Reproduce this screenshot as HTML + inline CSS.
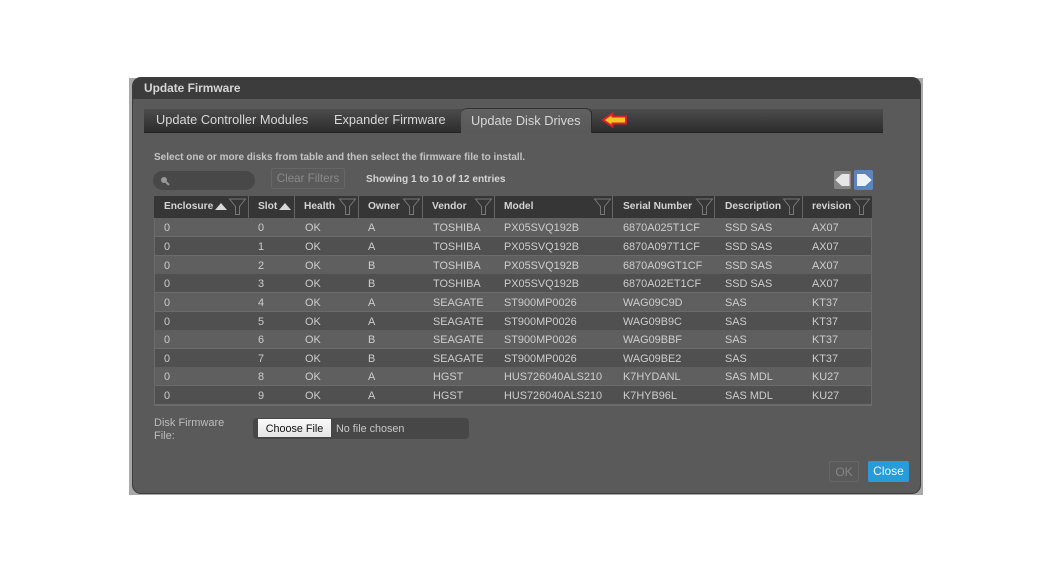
<!DOCTYPE html>
<html>
<head>
<meta charset="utf-8">
<style>
html,body{margin:0;padding:0;background:#fff;}
body{width:1051px;height:571px;position:relative;overflow:hidden;font-family:"Liberation Sans",sans-serif;filter:blur(.3px);}
.a{position:absolute;white-space:nowrap;}
#strip{left:129px;top:78px;width:794px;height:417px;background:#a9a9a9;}
#dlg{left:133px;top:78px;width:787px;height:415px;background:#5a5a5a;border-radius:8px;box-shadow:0 0 0 1px #3d3d3d;overflow:hidden;}
#title{left:133px;top:78px;width:787px;height:21px;background:#3c3c3c;border-radius:8px 8px 0 0;}
#ttext{left:144px;top:81px;font:bold 11.9px "Liberation Sans",sans-serif;color:#d6d6d6;}
#tabbar{left:144px;top:109px;width:739px;height:23px;background:linear-gradient(#4c4c4c,#2d2d2d);border-bottom:1px solid #222;}
#tabon{left:461px;top:108px;width:130px;height:24px;background:linear-gradient(#616161,#585858);border-radius:6px 6px 0 0;border-top:1px solid #333;border-right:1px solid #2c2c2c;}
.tab{font-size:12.8px;color:#d8d8d8;top:112px;}
.t11{font-size:11px;color:#cfcfcf;}
.b{font-weight:bold;}
#search{left:153px;top:171px;width:102px;height:19px;background:#484848;border-radius:10px;}
#clear{left:271px;top:168px;width:74px;height:21px;border:1px solid #666;border-radius:2px;box-sizing:border-box;color:#8a8a8a;font-size:11.6px;line-height:20px;text-align:center;}
#head{left:154px;top:196px;width:718px;height:22px;background:#363636;}
.sep{top:196px;width:1px;height:22px;background:#666;}
.row{left:154px;width:718px;height:18px;border-bottom:1px solid #6b6b6b;box-shadow:inset 1px 0 0 #6b6b6b,inset -1px 0 0 #6b6b6b;}
.l{background:#5f5f5f;}
.d{background:#505050;}
.c{position:absolute;top:1px;font-size:10.9px;color:#cdcdcd;line-height:18px;}
.h{font-size:10.2px;font-weight:bold;color:#d4d4d4;top:201px;}
#file{left:253px;top:418px;width:216px;height:21px;background:#474747;border-radius:4px;}
#btn{left:258px;top:419px;width:73px;height:18px;background:linear-gradient(#fafafa,#e4e4e4);color:#111;font-size:10.8px;line-height:20px;text-align:center;}
#ok{left:829px;top:461px;width:30px;height:21px;border:1px solid #666;box-sizing:border-box;border-radius:2px;color:#868686;font-size:12px;line-height:20px;text-align:center;}
#close{left:868px;top:461px;width:41px;height:21px;background:#269ddb;border-radius:2px;color:#f0f6fa;font-size:12px;line-height:21px;text-align:center;}
svg{position:absolute;overflow:visible;}
</style>
</head>
<body>
<div class="a" id="strip"></div>
<div class="a" id="dlg"></div>
<div class="a" id="title"></div>
<div class="a" id="ttext">Update Firmware</div>

<div class="a" id="tabbar"></div>
<div class="a" id="tabon"></div>
<div class="a tab" style="left:156px">Update Controller Modules</div>
<div class="a tab" style="left:334px">Expander Firmware</div>
<div class="a tab" style="left:471px;top:113px">Update Disk Drives</div>
<svg style="left:0;top:0" width="1051" height="571"><path d="M603 120L612.500 113.500V116.500H626V123.500H612.500V126.500Z" fill="#f4c51e" stroke="#d9202a" stroke-width="2"/></svg>

<div class="a b" style="left:154px;top:152px;font-size:10px;color:#c4c4c4">Select one or more disks from table and then select the firmware file to install.</div>
<div class="a" id="search"></div>
<svg style="left:158px;top:174px" width="14" height="14"><circle cx="6" cy="6" r="3" fill="#999"/><path d="M8 8L11 11" stroke="#999" stroke-width="2"/></svg>
<div class="a" id="clear">Clear Filters</div>
<div class="a b" style="left:366px;top:174px;font-size:10.15px;color:#d4d4d4">Showing 1 to 10 of 12 entries</div>

<div class="a" style="left:834px;top:171px;width:17px;height:18px;background:#858585;border-radius:2px"></div>
<svg style="left:834px;top:171px" width="17" height="18"><path d="M2 9L8 3.500H15V14.500H8Z" fill="#e6e6e6" stroke="#e6e6e6" stroke-linejoin="round"/></svg>
<div class="a" style="left:854px;top:170px;width:19px;height:20px;background:#5c85bd;border-radius:2px"></div>
<svg style="left:854px;top:170px" width="19" height="20"><path d="M17 10L11 4.500H3.500V15.500H11Z" fill="#eef2f8" stroke="#eef2f8" stroke-linejoin="round"/></svg>

<div class="a" id="head"></div>
<div class="a sep" style="left:248px"></div>
<div class="a sep" style="left:294px"></div>
<div class="a sep" style="left:358px"></div>
<div class="a sep" style="left:422px"></div>
<div class="a sep" style="left:494px"></div>
<div class="a sep" style="left:612px"></div>
<div class="a sep" style="left:714px"></div>
<div class="a sep" style="left:802px"></div>

<div class="a h" style="left:164px">Enclosure</div>
<div class="a h" style="left:258px">Slot</div>
<div class="a h" style="left:304px">Health</div>
<div class="a h" style="left:368px">Owner</div>
<div class="a h" style="left:432px">Vendor</div>
<div class="a h" style="left:504px">Model</div>
<div class="a h" style="left:623px">Serial Number</div>
<div class="a h" style="left:725px">Description</div>
<div class="a h" style="left:812px">revision</div>

<svg style="left:0;top:0" width="1051" height="571">
<path d="M215 210L221 203L227 210Z" fill="#d8d8d8"/>
<path d="M279 210L285 203L291 210Z" fill="#d8d8d8"/>
<g fill="none" stroke="#777" stroke-width="1">
<path d="M229.500 199H245.500L239.500 206.500V214.500H235.500V206.500Z"/>
<path d="M339.500 199H355.500L349.500 206.500V214.500H345.500V206.500Z"/>
<path d="M403.500 199H419.500L413.500 206.500V214.500H409.500V206.500Z"/>
<path d="M475.500 199H491.500L485.500 206.500V214.500H481.500V206.500Z"/>
<path d="M594.500 199H610.500L604.500 206.500V214.500H600.500V206.500Z"/>
<path d="M696.500 199H712.500L706.500 206.500V214.500H702.500V206.500Z"/>
<path d="M783.500 199H799.500L793.500 206.500V214.500H789.500V206.500Z"/>
<path d="M853.500 199H869.500L863.500 206.500V214.500H859.500V206.500Z"/>
</g>
</svg>

<div class="a row l" style="top:218px"><span class="c" style="left:10px">0</span><span class="c" style="left:104px">0</span><span class="c" style="left:151px">OK</span><span class="c" style="left:214px">A</span><span class="c" style="left:279px">TOSHIBA</span><span class="c" style="left:350px">PX05SVQ192B</span><span class="c" style="left:469px">6870A025T1CF</span><span class="c" style="left:571px">SSD SAS</span><span class="c" style="left:658px">AX07</span></div>
<div class="a row d" style="top:237px"><span class="c" style="left:10px">0</span><span class="c" style="left:104px">1</span><span class="c" style="left:151px">OK</span><span class="c" style="left:214px">A</span><span class="c" style="left:279px">TOSHIBA</span><span class="c" style="left:350px">PX05SVQ192B</span><span class="c" style="left:469px">6870A097T1CF</span><span class="c" style="left:571px">SSD SAS</span><span class="c" style="left:658px">AX07</span></div>
<div class="a row l" style="top:256px"><span class="c" style="left:10px">0</span><span class="c" style="left:104px">2</span><span class="c" style="left:151px">OK</span><span class="c" style="left:214px">B</span><span class="c" style="left:279px">TOSHIBA</span><span class="c" style="left:350px">PX05SVQ192B</span><span class="c" style="left:469px">6870A09GT1CF</span><span class="c" style="left:571px">SSD SAS</span><span class="c" style="left:658px">AX07</span></div>
<div class="a row d" style="top:274px"><span class="c" style="left:10px">0</span><span class="c" style="left:104px">3</span><span class="c" style="left:151px">OK</span><span class="c" style="left:214px">B</span><span class="c" style="left:279px">TOSHIBA</span><span class="c" style="left:350px">PX05SVQ192B</span><span class="c" style="left:469px">6870A02ET1CF</span><span class="c" style="left:571px">SSD SAS</span><span class="c" style="left:658px">AX07</span></div>
<div class="a row l" style="top:293px"><span class="c" style="left:10px">0</span><span class="c" style="left:104px">4</span><span class="c" style="left:151px">OK</span><span class="c" style="left:214px">A</span><span class="c" style="left:279px">SEAGATE</span><span class="c" style="left:350px">ST900MP0026</span><span class="c" style="left:469px">WAG09C9D</span><span class="c" style="left:571px">SAS</span><span class="c" style="left:658px">KT37</span></div>
<div class="a row d" style="top:312px"><span class="c" style="left:10px">0</span><span class="c" style="left:104px">5</span><span class="c" style="left:151px">OK</span><span class="c" style="left:214px">A</span><span class="c" style="left:279px">SEAGATE</span><span class="c" style="left:350px">ST900MP0026</span><span class="c" style="left:469px">WAG09B9C</span><span class="c" style="left:571px">SAS</span><span class="c" style="left:658px">KT37</span></div>
<div class="a row l" style="top:330px"><span class="c" style="left:10px">0</span><span class="c" style="left:104px">6</span><span class="c" style="left:151px">OK</span><span class="c" style="left:214px">B</span><span class="c" style="left:279px">SEAGATE</span><span class="c" style="left:350px">ST900MP0026</span><span class="c" style="left:469px">WAG09BBF</span><span class="c" style="left:571px">SAS</span><span class="c" style="left:658px">KT37</span></div>
<div class="a row d" style="top:349px"><span class="c" style="left:10px">0</span><span class="c" style="left:104px">7</span><span class="c" style="left:151px">OK</span><span class="c" style="left:214px">B</span><span class="c" style="left:279px">SEAGATE</span><span class="c" style="left:350px">ST900MP0026</span><span class="c" style="left:469px">WAG09BE2</span><span class="c" style="left:571px">SAS</span><span class="c" style="left:658px">KT37</span></div>
<div class="a row l" style="top:367px"><span class="c" style="left:10px">0</span><span class="c" style="left:104px">8</span><span class="c" style="left:151px">OK</span><span class="c" style="left:214px">A</span><span class="c" style="left:279px">HGST</span><span class="c" style="left:350px">HUS726040ALS210</span><span class="c" style="left:469px">K7HYDANL</span><span class="c" style="left:571px">SAS MDL</span><span class="c" style="left:658px">KU27</span></div>
<div class="a row d" style="top:386px;border-bottom:2px solid #6b6b6b"><span class="c" style="left:10px">0</span><span class="c" style="left:104px">9</span><span class="c" style="left:151px">OK</span><span class="c" style="left:214px">A</span><span class="c" style="left:279px">HGST</span><span class="c" style="left:350px">HUS726040ALS210</span><span class="c" style="left:469px">K7HYB96L</span><span class="c" style="left:571px">SAS MDL</span><span class="c" style="left:658px">KU27</span></div>

<div class="a t11" style="left:154px;top:417px;line-height:13px;color:#bdbdbd;white-space:normal;width:80px">Disk Firmware File:</div>
<div class="a" id="file"></div>
<div class="a" id="btn">Choose File</div>
<div class="a t11" style="left:336px;top:423px;color:#c8c8c8;font-size:10.8px">No file chosen</div>
<div class="a" id="ok">OK</div>
<div class="a" id="close">Close</div>
</body>
</html>
